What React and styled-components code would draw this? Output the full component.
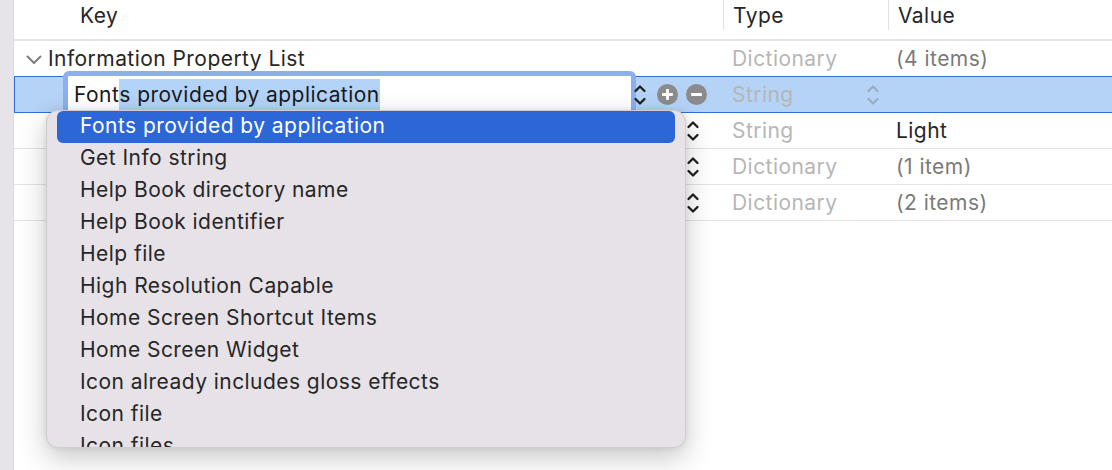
import React from 'react'
import styled, { createGlobalStyle } from 'styled-components'

const GlobalStyle = createGlobalStyle`
  html, body {
    margin: 0;
    padding: 0;
    background: #ffffff;
  }
  body {
    font-family: Inter, "Liberation Sans", sans-serif;
    font-size: 21px;
    letter-spacing: 0.45px;
    color: #262626;
    -webkit-font-smoothing: antialiased;
  }
`

const rows = [
  { type: 'String', value: 'Light', dark: true },
  { type: 'Dictionary', value: '(1 item)' },
  { type: 'Dictionary', value: '(2 items)' },
]

const menuItems = [
  'Fonts provided by application',
  'Get Info string',
  'Help Book directory name',
  'Help Book identifier',
  'Help file',
  'High Resolution Capable',
  'Home Screen Shortcut Items',
  'Home Screen Widget',
  'Icon already includes gloss effects',
  'Icon file',
  'Icon files',
]

const Stepper = ({ color = '#1f1f1f' }) => (
  <svg width="14" height="24" viewBox="0 0 14 24">
    <path d="M2.5 8 L7 3.5 L11.5 8" fill="none" stroke={color} strokeWidth="2.3" strokeLinecap="round" strokeLinejoin="round" />
    <path d="M2.5 16 L7 20.5 L11.5 16" fill="none" stroke={color} strokeWidth="2.3" strokeLinecap="round" strokeLinejoin="round" />
  </svg>
)

const CircleButton = ({ plus }) => (
  <svg width="21" height="21" viewBox="0 0 21 21">
    <circle cx="10.5" cy="10.5" r="10.5" fill="#8b8b8d" />
    <rect x="5" y="9" width="11" height="3" rx="1" fill="#ffffff" />
    {plus && <rect x="9" y="5" width="3" height="11" rx="1" fill="#ffffff" />}
  </svg>
)

const Disclosure = () => (
  <svg width="16" height="10" viewBox="0 0 16 10">
    <path d="M1.5 1.5 L8 8 L14.5 1.5" fill="none" stroke="#7e7e7e" strokeWidth="2" strokeLinecap="round" strokeLinejoin="round" />
  </svg>
)

const App = () => {
  return (
    <Page>
      <GlobalStyle />
      <Sidebar />
      <Main>
        <Header>
          <HeadCell $pad={66}>Key</HeadCell>
          <HeadCell $divider>Type</HeadCell>
          <HeadCell $divider>Value</HeadCell>
        </Header>

        <Row>
          <KeyCell>
            <Twisty><Disclosure /></Twisty>
            Information Property List
          </KeyCell>
          <TypeCell>Dictionary</TypeCell>
          <ValueCell>(4 items)</ValueCell>
        </Row>

        <Row $selected>
          <KeyCell $editing>
            <Field>
              Font<Selection>s provided by application</Selection>
            </Field>
            <Controls>
              <Stepper />
              <CircleButton plus />
              <CircleButton />
            </Controls>
          </KeyCell>
          <TypeCell>
            String
            <TypeStepper><Stepper color="#98acc6" /></TypeStepper>
          </TypeCell>
          <ValueCell />
        </Row>

        {rows.map((r, i) => (
          <Row key={i}>
            <KeyCell $end>
              <Stepper />
            </KeyCell>
            <TypeCell>{r.type}</TypeCell>
            <ValueCell $dark={r.dark}>{r.value}</ValueCell>
          </Row>
        ))}
      </Main>

      <Menu>
        {menuItems.map((item, i) => (
          <MenuItem key={item} $active={i === 0}>{item}</MenuItem>
        ))}
      </Menu>
    </Page>
  )
}
export default App

const Page = styled.div`
  position: relative;
  display: flex;
  width: 1112px;
  height: 470px;
  overflow: hidden;
  background: #ffffff;
`

const Sidebar = styled.div`
  width: 13px;
  flex-shrink: 0;
  background: #e6e4e8;
  border-right: 1px solid #dcdadf;
`

const Main = styled.div`
  flex: 1;
  display: flex;
  flex-direction: column;
`

const columns = `
  display: grid;
  grid-template-columns: 709px 165px 1fr;
  grid-template-rows: minmax(0, 1fr);
`

const Header = styled.div`
  ${columns}
  height: 39px;
  border-bottom: 2px solid #e4e4e4;
`

const HeadCell = styled.div`
  display: flex;
  align-items: center;
  height: 30px;
  padding-left: ${p => p.$pad || 9}px;
  border-left: ${p => (p.$divider ? '1px solid #e2e2e2' : 'none')};
  color: #262626;
`

const Row = styled.div`
  ${columns}
  height: 36px;
  box-sizing: border-box;
  border-bottom: 1px solid ${p => (p.$selected ? '#2f6edb' : '#e3e3e3')};
  background: ${p => (p.$selected ? '#b5d3f7' : '#ffffff')};
  box-shadow: ${p => (p.$selected ? 'inset 1px 0 0 #2f6edb, 0 -1px 0 #2f6edb' : 'none')};
  position: relative;
`

const KeyCell = styled.div`
  display: flex;
  min-height: 0;
  align-items: ${p => (p.$editing ? 'flex-end' : 'center')};
  justify-content: ${p => (p.$end ? 'flex-end' : 'flex-start')};
  padding-left: ${p => (p.$editing ? 49 : 12)}px;
  padding-right: ${p => (p.$end ? 23 : 0)}px;
  white-space: nowrap;
  svg {
    display: block;
  }
`

const Twisty = styled.span`
  display: inline-flex;
  width: 22px;
  margin-top: 2px;
`

const Field = styled.div`
  display: flex;
  align-items: center;
  flex-shrink: 0;
  width: 573px;
  height: 41px;
  padding-left: 6px;
  box-sizing: border-box;
  background: #ffffff;
  border: 5px solid #8cb0ee;
  border-bottom: none;
  border-radius: 6px 6px 0 0;
  color: #1a1a1a;
`

const Selection = styled.span`
  background: #b4d3f8;
  padding: 3px 0;
`

const Controls = styled.div`
  display: flex;
  align-items: center;
  align-self: center;
  gap: 8px;
  margin-left: -3px;
  svg:first-child {
    margin-right: 2px;
  }
`

const TypeCell = styled.div`
  display: flex;
  align-items: center;
  padding-left: 9px;
  color: #b6b6b6;
  white-space: nowrap;
`

const TypeStepper = styled.span`
  margin-left: auto;
  margin-right: 8px;
  display: flex;
`

const ValueCell = styled.div`
  display: flex;
  align-items: center;
  padding-left: 8px;
  color: ${p => (p.$dark ? '#262626' : '#7a7a7a')};
`

const Menu = styled.div`
  position: absolute;
  left: 46px;
  top: 110px;
  width: 640px;
  height: 338px;
  box-sizing: border-box;
  padding: 0 10px;
  overflow: hidden;
  background: #e7e2e7;
  border: 1px solid #cfcbd0;
  border-radius: 12px;
  box-shadow: 0 10px 28px rgba(0, 0, 0, 0.22), 0 0 6px rgba(0, 0, 0, 0.08);
  z-index: 2;
`

const MenuItem = styled.div`
  height: 32px;
  box-sizing: border-box;
  padding: 0 0 3px 23px;
  display: flex;
  align-items: center;
  border-radius: 6px;
  background: ${p => (p.$active ? '#2c66d7' : 'transparent')};
  color: ${p => (p.$active ? '#ffffff' : '#262626')};
  white-space: nowrap;
`
